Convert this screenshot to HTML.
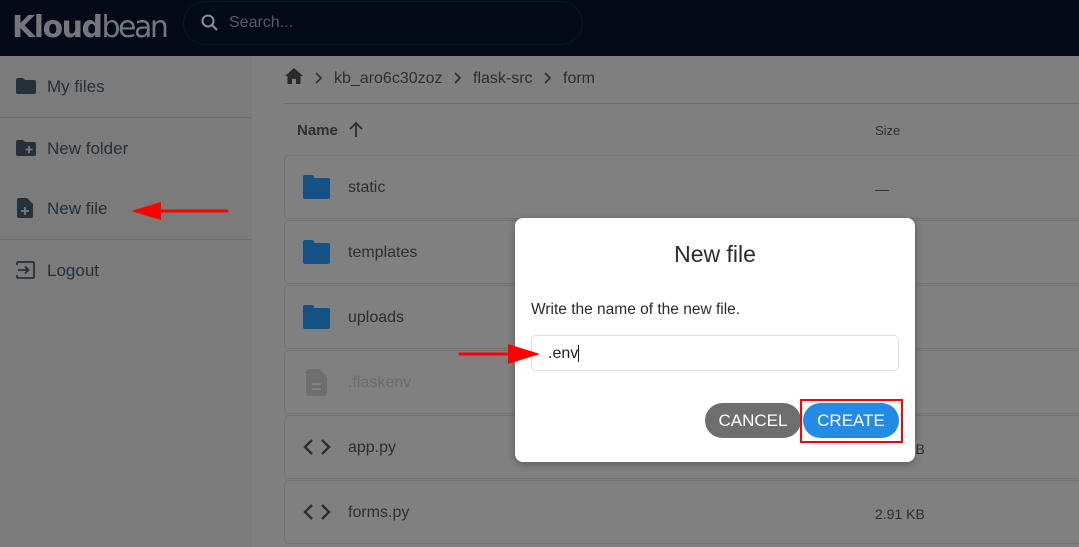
<!DOCTYPE html>
<html><head><meta charset="utf-8"><style>
*{box-sizing:border-box;margin:0;padding:0}
body{width:1079px;height:547px;overflow:hidden;background:#7f7f7f;font-family:"Liberation Sans",Arial,sans-serif;position:relative;color:#2e2e2e}
.hdr{position:absolute;left:0;top:0;width:1079px;height:56px;background:#030a18}
.logo{position:absolute;left:12px;top:10px;font-size:30px;color:#74767a;letter-spacing:-1.5px;font-family:"DejaVu Sans",sans-serif}
.logo b{font-weight:bold}
.logo span{font-weight:normal;font-family:"DejaVu Sans",sans-serif;letter-spacing:-2.5px}
.search{position:absolute;left:183px;top:1px;width:400px;height:44px;border:1px solid #0d1626;border-radius:22px;background:#040b18}
.search .t{position:absolute;left:45px;top:12px;color:#555a62;font-size:16px}
.side{position:absolute;left:0;top:56px;width:252px;height:491px;background:#7b7b7b}
.si{position:absolute;left:47px;font-size:17px;color:#25313a}
.ic{position:absolute;left:16px}
.hr{position:absolute;height:1px;background:#6e6e6e}
.row{position:absolute;left:284px;width:800px;height:64px;border:1px solid #747474;border-radius:5px;background:#808080}
.row .n{position:absolute;left:63px;top:23px;font-size:16px;color:#2e2e2e}
.row .s{position:absolute;left:590px;top:25px;font-size:14px;color:#2e2e2e}
.fold{position:absolute;left:18px;top:22px;width:27px;height:21px;background:#145184;border-radius:2px}
.fold:before{content:"";position:absolute;left:0;top:-3px;width:11px;height:5px;background:#145184;border-radius:2px 2px 0 0}
.code{position:absolute;left:18px;top:22px}
.dlg{position:absolute;left:515px;top:218px;width:400px;height:244px;background:#fff;border-radius:8px;box-shadow:0 2px 8px rgba(0,0,0,.3)}
.dlg h2{position:absolute;left:0;width:400px;top:23px;text-align:center;font-weight:normal;font-size:23px;color:#2b2b2b}
.dlg p{position:absolute;left:16px;top:83px;font-size:15.5px;color:#2b2b2b}
.inp{position:absolute;left:16px;top:117px;width:368px;height:36px;border:1px solid #ddd;border-radius:5px}
.inp span{position:absolute;left:16px;top:9px;font-size:16px;color:#222}
.btn{position:absolute;top:185px;height:35px;border-radius:18px;color:#fff;font-size:17px;text-align:center;line-height:35px}
</style></head><body>
<div class="hdr">
 <div class="logo"><b>Kloud</b><span>bean</span></div>
 <div class="search"><svg style="position:absolute;left:16px;top:11px" width="20" height="20" viewBox="0 0 20 20"><circle cx="8" cy="8" r="5.5" fill="none" stroke="#8a8e94" stroke-width="2"/><path d="M12 12l5 5" stroke="#8a8e94" stroke-width="2"/></svg><span class="t">Search...</span></div>
</div>
<div class="side">
 <svg class="ic" style="top:22px" width="20" height="16" viewBox="0 0 20 16"><path d="M0 2a2 2 0 0 1 2-2h5l2 2h9a2 2 0 0 1 2 2v10a2 2 0 0 1-2 2H2a2 2 0 0 1-2-2z" fill="#25313a"/></svg>
 <div class="si" style="top:21px">My files</div>
 <div class="hr" style="left:0;top:61px;width:252px"></div>
 <svg class="ic" style="top:84px" width="20" height="16" viewBox="0 0 20 16"><path d="M0 2a2 2 0 0 1 2-2h5l2 2h9a2 2 0 0 1 2 2v10a2 2 0 0 1-2 2H2a2 2 0 0 1-2-2z" fill="#25313a"/><path d="M13 6v7M9.5 9.5h7" stroke="#7b7b7b" stroke-width="1.8"/></svg>
 <div class="si" style="top:83px">New folder</div>
 <svg class="ic" style="top:142px;left:17px" width="16" height="20" viewBox="0 0 16 20"><path d="M2 0h8l6 6v12a2 2 0 0 1-2 2H2a2 2 0 0 1-2-2V2a2 2 0 0 1 2-2z" fill="#25313a"/><path d="M8 9v8M4 13h8" stroke="#7b7b7b" stroke-width="1.8"/></svg>
 <div class="si" style="top:143px">New file</div>
 <div class="hr" style="left:0;top:183px;width:252px"></div>
 <svg class="ic" style="top:205px" width="20" height="18" viewBox="0 0 20 18"><path d="M1 4V2a1 1 0 0 1 1-1h15a1 1 0 0 1 1 1v14a1 1 0 0 1-1 1H2a1 1 0 0 1-1-1v-2M2 9h10M9 5.5L12.5 9 9 12.5" fill="none" stroke="#25313a" stroke-width="1.8"/></svg>
 <div class="si" style="top:205px">Logout</div>
</div>
<svg style="position:absolute;left:131px;top:201px" width="98" height="20" viewBox="0 0 98 20"><path d="M28 10H96" stroke="#f00" stroke-width="3" stroke-linecap="round"/><path d="M0 10L30 1v18z" fill="#f00"/></svg>
<svg style="position:absolute;left:285px;top:68px" width="18" height="16" viewBox="0 0 18 16"><path d="M9 0L0 8h2.5v8h4.5v-5h4v5h4.5V8H18z" fill="#2a2a2a"/></svg>
<svg style="position:absolute;left:314px;top:72px" width="10" height="12" viewBox="0 0 10 12"><path d="M2 1l5 5-5 5" fill="none" stroke="#2e2e2e" stroke-width="1.6"/></svg>
<div style="position:absolute;left:334px;top:70px;font-size:16px;color:#2e2e2e">kb_aro6c30zoz</div>
<svg style="position:absolute;left:453px;top:72px" width="10" height="12" viewBox="0 0 10 12"><path d="M2 1l5 5-5 5" fill="none" stroke="#2e2e2e" stroke-width="1.6"/></svg>
<div style="position:absolute;left:473px;top:70px;font-size:16px;color:#2e2e2e">flask-src</div>
<svg style="position:absolute;left:543px;top:72px" width="10" height="12" viewBox="0 0 10 12"><path d="M2 1l5 5-5 5" fill="none" stroke="#2e2e2e" stroke-width="1.6"/></svg>
<div style="position:absolute;left:563px;top:70px;font-size:16px;color:#2e2e2e">form</div>
<div class="hr" style="left:284px;top:103px;width:795px"></div>
<div style="position:absolute;left:297px;top:122px;font-size:15px;font-weight:bold;color:#2e2e2e">Name</div>
<svg style="position:absolute;left:348px;top:121px" width="16" height="17" viewBox="0 0 16 17"><path d="M8 16V2M2 8l6-6 6 6" fill="none" stroke="#2e2e2e" stroke-width="1.8"/></svg>
<div style="position:absolute;left:875px;top:123px;font-size:13px;color:#2e2e2e">Size</div>
<div class="row" style="top:155px"><div class="fold"></div><div class="n">static</div><div class="s">—</div></div>
<div class="row" style="top:220px"><div class="fold"></div><div class="n">templates</div></div>
<div class="row" style="top:285px"><div class="fold"></div><div class="n">uploads</div></div>
<div class="row" style="top:350px"><svg style="position:absolute;left:21px;top:18px" width="21" height="27" viewBox="0 0 21 27"><path d="M3 0h10l8 8v16a3 3 0 0 1-3 3H3a3 3 0 0 1-3-3V3a3 3 0 0 1 3-3z" fill="#6e6e6e"/><path d="M6 15h9M6 20h9" stroke="#808080" stroke-width="2"/></svg><div class="n" style="color:#6c6c6c">.flaskenv</div></div>
<div class="row" style="top:415px"><svg class="code" width="28" height="18" viewBox="0 0 28 18"><path d="M9 2L2 9l7 7M19 2l7 7-7 7" fill="none" stroke="#2e2e2e" stroke-width="2.4"/></svg><div class="n">app.py</div><div class="s">2.91 KB</div></div>
<div class="row" style="top:480px"><svg class="code" width="28" height="18" viewBox="0 0 28 18"><path d="M9 2L2 9l7 7M19 2l7 7-7 7" fill="none" stroke="#2e2e2e" stroke-width="2.4"/></svg><div class="n">forms.py</div><div class="s">2.91 KB</div></div>
<div class="dlg">
 <h2>New file</h2>
 <p>Write the name of the new file.</p>
 <div class="inp"><span>.env<span style="position:static;border-right:1px solid #222"></span></span></div>
 <div class="btn" style="left:190px;width:96px;background:#6e6e6e">CANCEL</div>
 <div class="btn" style="left:288px;width:96px;background:#238ae6">CREATE</div>
 <div style="position:absolute;left:285px;top:181px;width:103px;height:44px;border:2px solid #f00"></div>
</div>
<svg style="position:absolute;left:458px;top:342px;z-index:5" width="84" height="24" viewBox="0 0 84 24"><path d="M2 12H55" stroke="#f00" stroke-width="3" stroke-linecap="round"/><path d="M82 12L50 2v20z" fill="#f00"/></svg>
</body></html>
